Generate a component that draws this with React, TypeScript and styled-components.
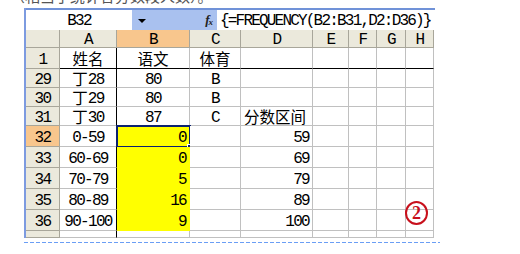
import React from "react";
import styled, { createGlobalStyle } from "styled-components";

const MONO = `"Liberation Mono", "Courier New", "DejaVu Sans Mono", monospace`;

const GlobalStyle = createGlobalStyle`
  html, body { margin: 0; padding: 0; background: #fff; }
  body {
    width: 520px; height: 254px; overflow: hidden;
    font-family: ${MONO};
    color: #000;
  }
`;

const COLS = [34, 57, 73, 51, 72, 36, 28, 29, 28];
const ROWS = [18, 21, 19, 19, 19, 21, 21, 21, 21, 21, 7];
const LETTERS = ["A", "B", "C", "D", "E", "F", "G", "H"];

type Align = "left" | "center" | "right";
type CellData = { text?: string; align?: Align };
type RowData = { label: string; cells: CellData[] };

const ROW_DATA: RowData[] = [
  { label: "1", cells: [{ text: "姓名", align: "center" }, { text: "语文", align: "center" }, { text: "体育", align: "center" }] },
  { label: "29", cells: [{ text: "丁28", align: "center" }, { text: "80", align: "center" }, { text: "B", align: "center" }] },
  { label: "30", cells: [{ text: "丁29", align: "center" }, { text: "80", align: "center" }, { text: "B", align: "center" }] },
  { label: "31", cells: [{ text: "丁30", align: "center" }, { text: "87", align: "center" }, { text: "C", align: "center" }, { text: "分数区间", align: "left" }] },
  { label: "32", cells: [{ text: "0-59", align: "center" }, { text: "0", align: "right" }, {}, { text: "59", align: "right" }] },
  { label: "33", cells: [{ text: "60-69", align: "center" }, { text: "0", align: "right" }, {}, { text: "69", align: "right" }] },
  { label: "34", cells: [{ text: "70-79", align: "center" }, { text: "5", align: "right" }, {}, { text: "79", align: "right" }] },
  { label: "35", cells: [{ text: "80-89", align: "center" }, { text: "16", align: "right" }, {}, { text: "89", align: "right" }] },
  { label: "36", cells: [{ text: "90-100", align: "center" }, { text: "9", align: "right" }, {}, { text: "100", align: "right" }] },
  { label: "", cells: [] },
];

const Page = styled.div`
  width: 520px;
  height: 254px;
  overflow: hidden;
`;

const Caption = styled.div`
  height: 4px;
  overflow: hidden;
  padding-left: 10px;
`;

const CaptionText = styled.div`
  font-family: "Noto Sans CJK SC", sans-serif;
  font-size: 15px;
  line-height: 15px;
  margin-top: -12px;
  color: #555;
  white-space: nowrap;
`;

const Window = styled.div`
  position: relative;
  margin: 4px 0 0 24px;
  width: 409px;
  border-left: 2px solid #7d9be0;
`;

const FormulaBar = styled.div`
  display: flex;
  height: 22px;
  box-sizing: border-box;
  border-top: 2px solid #7092d8;
`;

const NameBox = styled.div`
  width: 106px;
  display: flex;
  align-items: center;
  justify-content: center;
  background: #fff;
  font-family: ${MONO};
  font-size: 16px;
  letter-spacing: -1.7px;
  padding-top: 2px;
  box-sizing: border-box;
`;

const Tools = styled.div`
  width: 85px;
  background: #a9c1ef;
  display: flex;
  align-items: center;
  justify-content: space-between;
  padding: 0 5px 0 6px;
  box-sizing: border-box;
`;

const Arrow = styled.span`
  width: 0;
  height: 0;
  border-left: 4px solid transparent;
  border-right: 4px solid transparent;
  border-top: 4px solid #000;
  margin-top: 2px;
`;

const Fx = styled.span`
  font-family: "Liberation Serif", serif;
  font-style: italic;
  font-weight: bold;
  font-size: 13px;
  color: #222;
  letter-spacing: -1px;
  sub { font-size: 9px; vertical-align: -1px; }
`;

const Formula = styled.div`
  flex: 1;
  background: #fff;
  display: flex;
  align-items: center;
  padding: 2px 0 0 3px;
  font-family: ${MONO};
  font-size: 16px;
  letter-spacing: -1.8px;
  white-space: nowrap;
  overflow: hidden;
`;

const Grid = styled.div`
  display: grid;
  grid-template-columns: ${COLS.map((c) => `${c}px`).join(" ")};
  grid-template-rows: ${ROWS.map((r) => `${r}px`).join(" ")};
  width: 408px;
  overflow: hidden;
`;

const HeadCell = styled.div<{ $active?: boolean }>`
  box-sizing: border-box;
  display: flex;
  align-items: center;
  justify-content: center;
  background: ${(p) => (p.$active ? "#f8c68d" : "#ebe9dc")};
  border-right: 1px solid #a8a69a;
  border-bottom: 1px solid #a8a69a;
  font-family: ${MONO};
  font-size: 16px;
  letter-spacing: -1.7px;
  padding-top: 3px;
  overflow: hidden;
`;

const justify: Record<Align, string> = { left: "flex-start", center: "center", right: "flex-end" };

const Cell = styled.div<{
  $align: Align;
  $fill?: boolean;
  $freezeRight?: boolean;
  $freezeBottom?: boolean;
  $selected?: boolean;
}>`
  position: relative;
  box-sizing: border-box;
  display: flex;
  align-items: center;
  justify-content: ${(p) => justify[p.$align]};
  padding: 4px 3px 0 3px;
  background: ${(p) => (p.$fill ? "#ffff00" : "#fff")};
  border-right: 1px solid ${(p) => (p.$freezeRight ? "#000" : p.$fill ? "#ffff00" : "#c0c0c0")};
  border-bottom: 1px solid ${(p) => (p.$freezeBottom ? "#000" : p.$fill ? "#ffff00" : "#c0c0c0")};
  font-family: ${MONO};
  font-size: 16px;
  letter-spacing: -1.7px;
  white-space: nowrap;
  ${(p) =>
    p.$selected &&
    `
    outline: 2px solid #0c2270;
    outline-offset: -1px;
    &::after {
      content: "";
      position: absolute;
      right: -3px;
      bottom: -3px;
      width: 5px;
      height: 5px;
      background: #0c2270;
      border: 1px solid #fff;
      box-sizing: border-box;
    }
  `}
`;

const Latin = styled.span`
  font-family: ${MONO};
`;

const Han = styled.span`
  font-family: "Noto Sans CJK SC", sans-serif;
  letter-spacing: 0;
  font-size: 15.5px;
  line-height: 1;
  margin-top: -3px;
`;

const Marker = styled.div`
  position: absolute;
  left: 379px;
  top: 193px;
  width: 23px;
  height: 24px;
  box-sizing: border-box;
  border: 2px solid #c8101c;
  border-radius: 50%;
  color: #c8101c;
  font-family: "Liberation Serif", serif;
  font-weight: bold;
  font-size: 18px;
  display: flex;
  align-items: center;
  justify-content: center;
  padding-top: 1px;
`;

const DashLine = styled.div`
  margin: 4px 0 0 24px;
  width: 416px;
  height: 1px;
  background: repeating-linear-gradient(to right, #6a9ef5 0 4px, transparent 4px 6px);
`;

const renderText = (t: string) => {
  const parts = t.split(/([\u4e00-\u9fff]+)/).filter(Boolean);
  return parts.map((p, i) => (/[\u4e00-\u9fff]/.test(p) ? <Han key={i}>{p}</Han> : <Latin key={i}>{p}</Latin>));
};

export default function App() {
  return (
    <>
      <GlobalStyle />
      <Page>
        <Caption>
          <CaptionText>（相当于统计各分数段人数）。</CaptionText>
        </Caption>
        <Window>
          <FormulaBar>
            <NameBox>B32</NameBox>
            <Tools>
              <Arrow />
              <Fx>
                f<sub>x</sub>
              </Fx>
            </Tools>
            <Formula>{"{=FREQUENCY(B2:B31,D2:D36)}"}</Formula>
          </FormulaBar>
          <Grid>
            <HeadCell />
            {LETTERS.map((l) => (
              <HeadCell key={l} $active={l === "B"}>
                {l}
              </HeadCell>
            ))}
            {ROW_DATA.map((row, ri) => {
              const rowNum = row.label;
              const selectedRow = rowNum === "32";
              const filledRow = ["32", "33", "34", "35", "36"].includes(rowNum);
              return (
                <React.Fragment key={ri}>
                  <HeadCell $active={selectedRow}>{row.label}</HeadCell>
                  {LETTERS.map((l, ci) => {
                    const c = row.cells[ci] || {};
                    return (
                      <Cell
                        key={l}
                        $align={c.align || "left"}
                        $fill={ci === 1 && filledRow}
                        $freezeRight={ci === 0}
                        $freezeBottom={ri === 0}
                        $selected={ci === 1 && selectedRow}
                      >
                        {c.text ? renderText(c.text) : null}
                      </Cell>
                    );
                  })}
                </React.Fragment>
              );
            })}
          </Grid>
          <Marker>2</Marker>
        </Window>
        <DashLine />
      </Page>
    </>
  );
}
